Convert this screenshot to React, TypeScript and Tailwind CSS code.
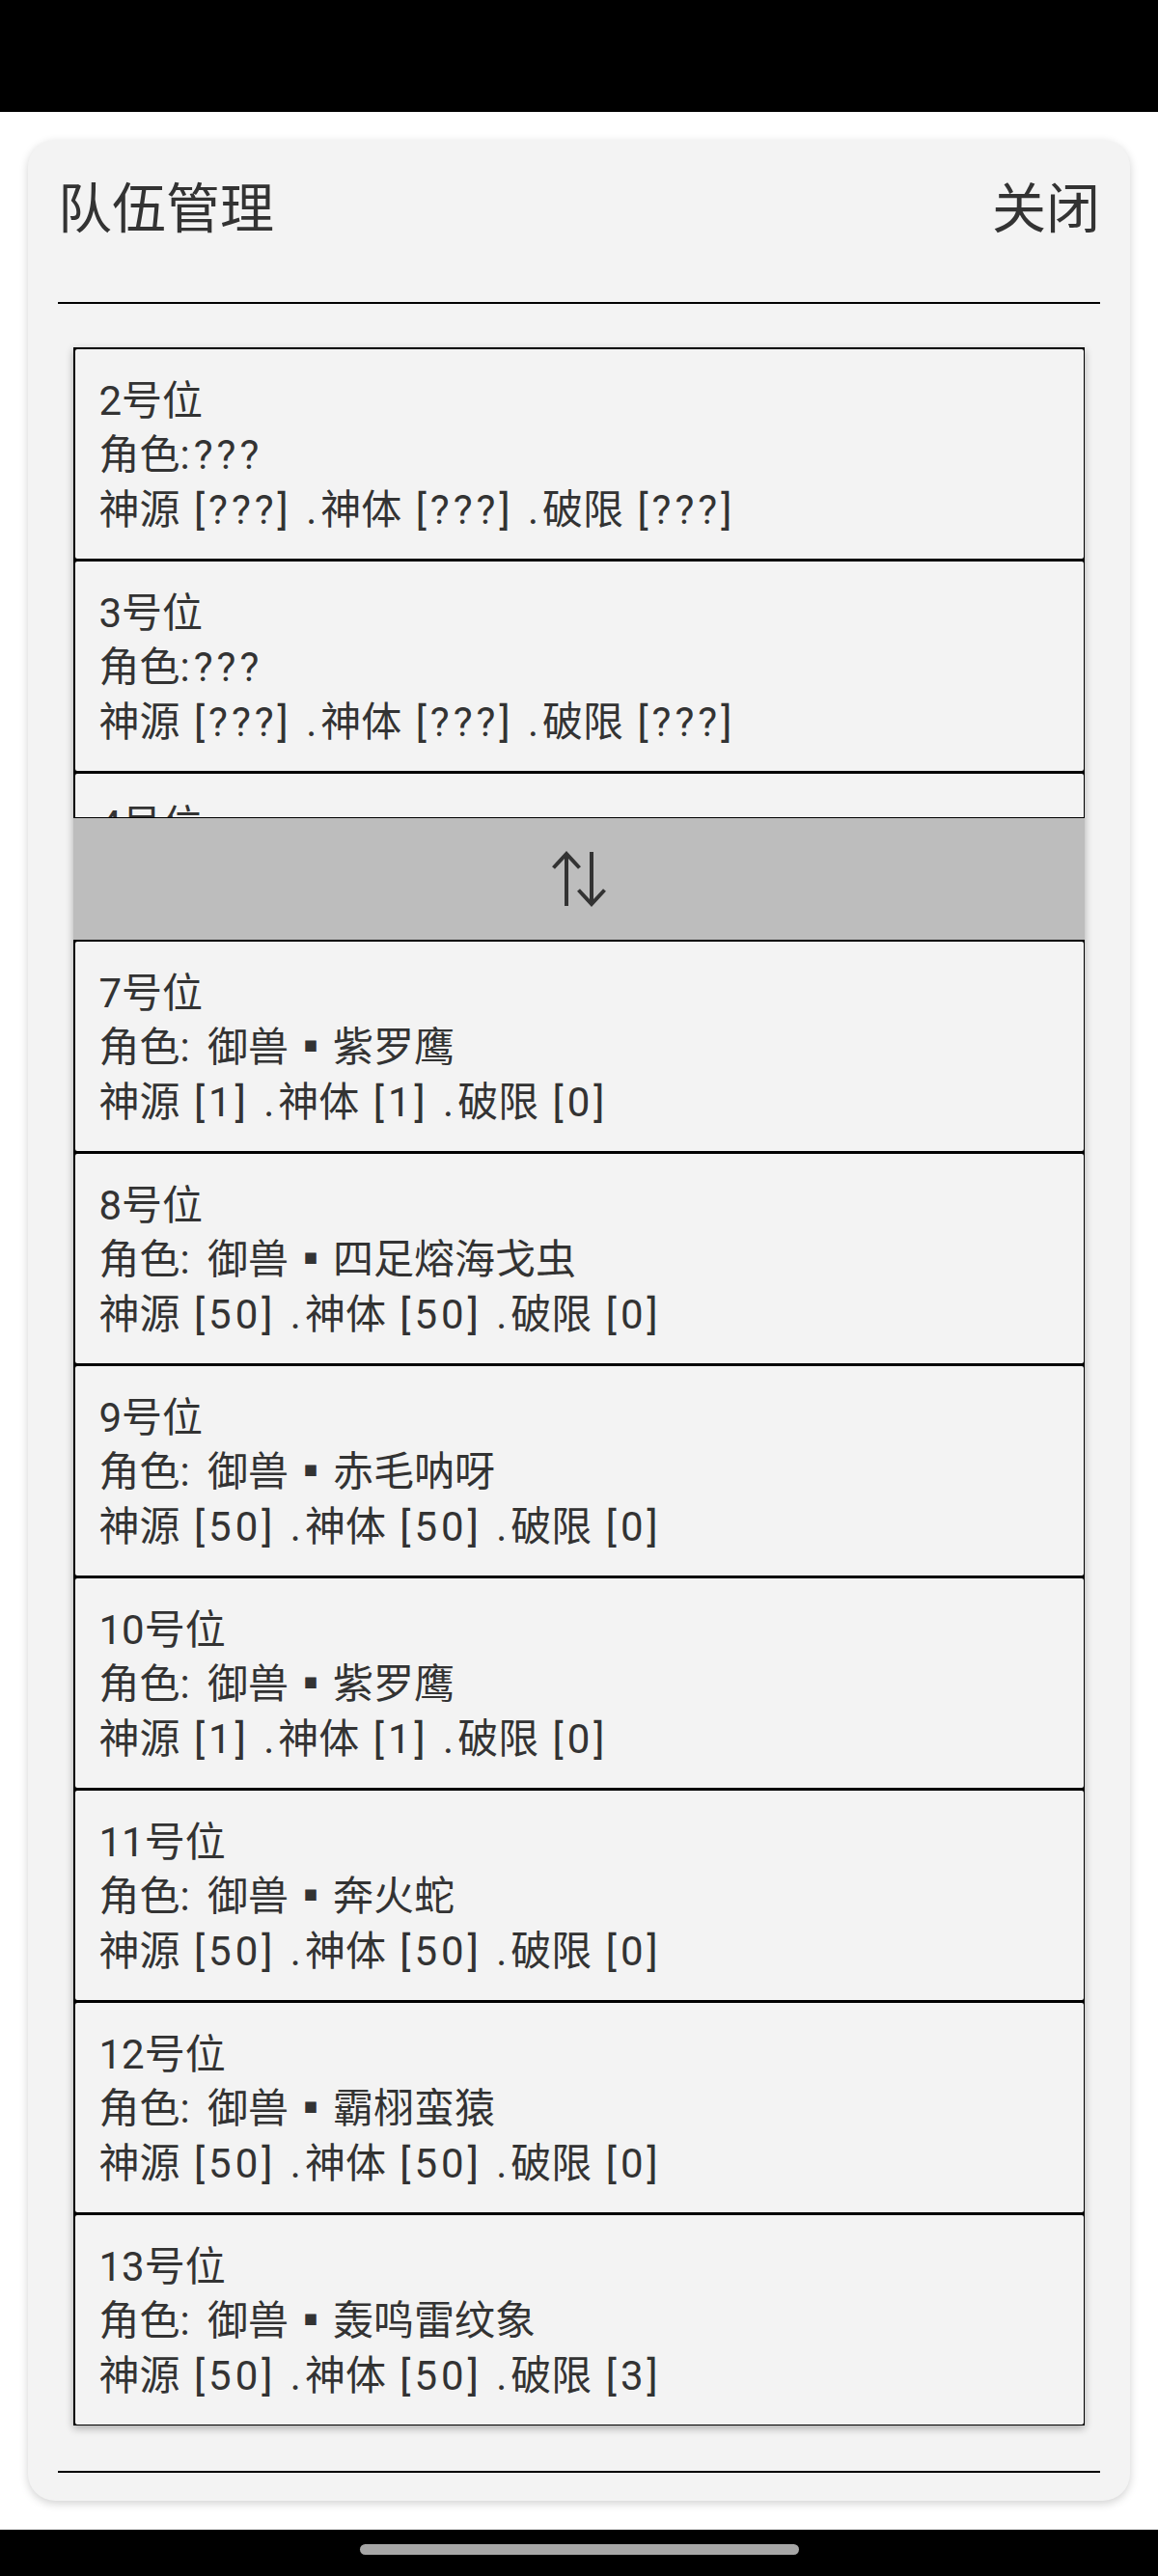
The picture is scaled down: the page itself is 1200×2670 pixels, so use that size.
import React from 'react';

type Slot = {
  no: number;
  role: string;
  stats: string;
};

const unknownStats = '神源 [???] .神体 [???] .破限 [???]';

const topSlots: Slot[] = [
  { no: 2, role: '角色:???', stats: unknownStats },
  { no: 3, role: '角色:???', stats: unknownStats },
  { no: 4, role: '角色:???', stats: unknownStats },
];

const bottomSlots: Slot[] = [
  { no: 7, role: '角色: 御兽 ▪ 紫罗鹰', stats: '神源 [1] .神体 [1] .破限 [0]' },
  { no: 8, role: '角色: 御兽 ▪ 四足熔海戈虫', stats: '神源 [50] .神体 [50] .破限 [0]' },
  { no: 9, role: '角色: 御兽 ▪ 赤毛呐呀', stats: '神源 [50] .神体 [50] .破限 [0]' },
  { no: 10, role: '角色: 御兽 ▪ 紫罗鹰', stats: '神源 [1] .神体 [1] .破限 [0]' },
  { no: 11, role: '角色: 御兽 ▪ 奔火蛇', stats: '神源 [50] .神体 [50] .破限 [0]' },
  { no: 12, role: '角色: 御兽 ▪ 霸栩蛮猿', stats: '神源 [50] .神体 [50] .破限 [0]' },
  { no: 13, role: '角色: 御兽 ▪ 轰鸣雷纹象', stats: '神源 [50] .神体 [50] .破限 [3]' },
];

// latin runs are set a bit looser than the hanzi, like the device font
const Spaced = ({ text }: { text: string }) => (
  <>
    {text.split(/([\u4e00-\u9fff]+|▪)/).map((part, i) => {
      if (!part) return null;
      if (part === '▪')
        return (
          <span key={i} className="inline-flex justify-center w-[17px]">
            ▪
          </span>
        );
      if (/[\u4e00-\u9fff]/.test(part)) return <span key={i}>{part}</span>;
      return (
        <span key={i} className="tracking-[4px]">
          {part}
        </span>
      );
    })}
  </>
);

const SlotCard = ({ slot }: { slot: Slot }) => (
  <div className="h-[217px] shrink-0 bg-[#f3f3f3] rounded-[2px] px-[25px] pt-[26px] text-[42px] leading-[56.5px] text-[#333333] whitespace-pre">
    <div>{slot.no}号位</div>
    <div>
      <Spaced text={slot.role} />
    </div>
    <div>
      <Spaced text={slot.stats} />
    </div>
  </div>
);

const SwapIcon = () => (
  <svg width="60" height="60" viewBox="0 0 60 60" fill="none" stroke="#333333" strokeWidth="4">
    <path d="M17 4 V58" />
    <path d="M3.5 18.5 L17 4 L30.5 18.5" />
    <path d="M43 2 V56" />
    <path d="M29.5 41.5 L43 56 L56.5 41.5" />
  </svg>
);

export default function App() {
  return (
    <div
      className="w-[1200px] h-[2670px] bg-white flex flex-col"
      style={{ fontFamily: 'Roboto, "Noto Sans CJK SC", sans-serif' }}
    >
      {/* status bar */}
      <div className="h-[116px] bg-black shrink-0" />

      <div className="flex-1 px-[29px] pt-[29px]">
        <div className="h-[2447px] bg-[#f3f3f3] rounded-[28px] shadow-[0_3px_10px_rgba(0,0,0,0.18)] pt-[40px] px-[31px] flex flex-col">
          {/* header */}
          <div className="flex justify-between text-[56px] leading-[64px] text-[#333333]">
            <span>队伍管理</span>
            <span>关闭</span>
          </div>
          <div className="mt-[64px] h-[2px] bg-black" />

          {/* lists */}
          <div className="mx-[16px] mt-[45px] shadow-[0_3px_8px_rgba(0,0,0,0.3)]">
            <div className="h-[487px] overflow-hidden bg-black p-[1.5px] pb-0 flex flex-col gap-[3px]">
              {topSlots.map(s => (
                <SlotCard key={s.no} slot={s} />
              ))}
            </div>

            <div className="h-[127px] bg-[#bdbdbd] border-t border-black flex items-center justify-center">
              <SwapIcon />
            </div>

            <div className="bg-black p-[1.5px] flex flex-col gap-[3px]">
              {bottomSlots.map(s => (
                <SlotCard key={s.no} slot={s} />
              ))}
            </div>
          </div>

          <div className="mt-[47px] h-[2px] bg-black" />
        </div>
      </div>

      {/* navigation bar */}
      <div className="h-[48px] bg-black shrink-0 flex justify-center pt-[15px]">
        <div className="w-[455px] h-[11px] rounded-full bg-[#a6a6a6]" />
      </div>
    </div>
  );
}
